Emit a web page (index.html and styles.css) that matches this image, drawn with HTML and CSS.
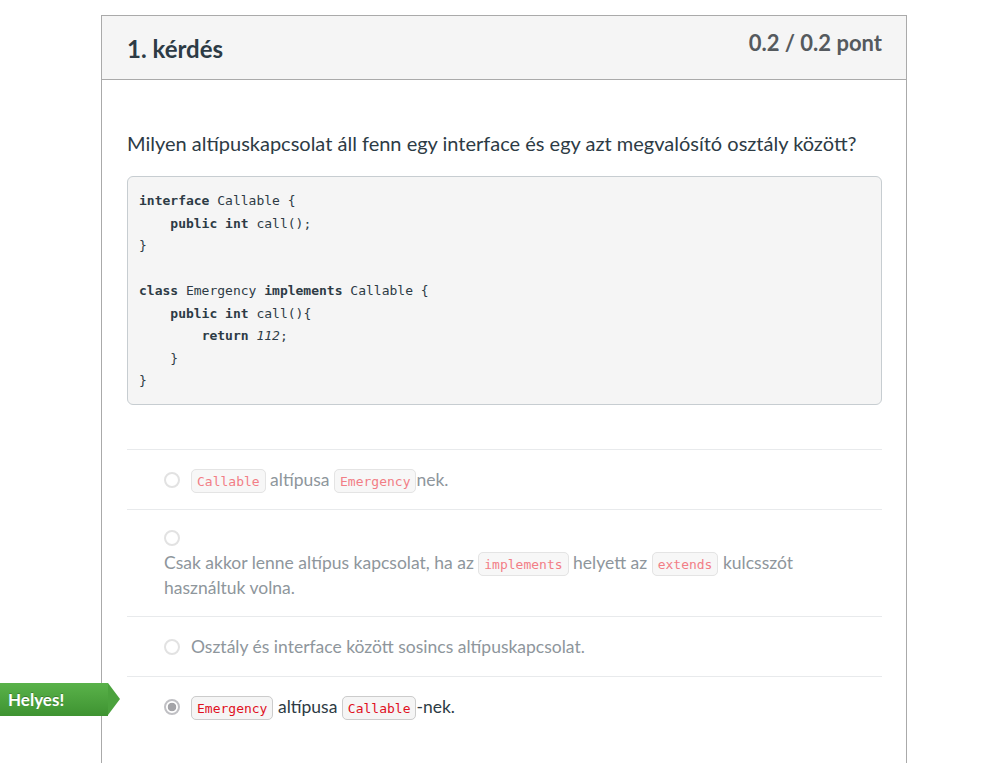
FILE: index.html
```html
<!DOCTYPE html>
<html lang="hu">
<head>
<meta charset="utf-8">
<link rel="stylesheet" href="styles.css">
</head>
<body>
<div class="question">
  <div class="header">
    <h2 class="title">1. kérdés</h2>
    <div class="points">0.2 / 0.2 pont</div>
  </div>
  <div class="content">
    <p class="qtext">Milyen altípuskapcsolat áll fenn egy interface és egy azt megvalósító osztály között?</p>
<pre class="code"><b>interface</b> Callable {
    <b>public</b> <b>int</b> call();
}

<b>class</b> Emergency <b>implements</b> Callable {
    <b>public</b> <b>int</b> call(){
        <b>return</b> <i>112</i>;
    }
}</pre>
    <div class="answers">
      <div class="answer dim">
        <span class="radio"></span><span class="atext"><code>Callable</code> altípusa <code>Emergency</code>nek.</span>
      </div>
      <div class="answer dim stacked">
        <span class="radio"></span>
        <div class="atext">Csak akkor lenne altípus kapcsolat, ha az <code>implements</code> helyett az <code>extends</code> kulcsszót használtuk volna.</div>
      </div>
      <div class="answer dim">
        <span class="radio"></span><span class="atext">Osztály és interface között sosincs altípuskapcsolat.</span>
      </div>
      <div class="answer selected">
        <div class="badge">Helyes!</div>
        <span class="radio checked"></span><span class="atext"><code>Emergency</code> altípusa <code>Callable</code>-nek.</span>
      </div>
    </div>
  </div>
</div>
</body>
</html>
```

FILE: styles.css
```css
html, body {
  margin: 0;
  padding: 0;
  background: #fff;
}
body {
  font-family: Lato, "Noto Sans", sans-serif;
  color: #2d3b45;
  padding-top: 15px;
  padding-left: 101px;
}
.question {
  width: 804px;
  border: 1px solid #aaaaaa;
  border-bottom: 0;
  height: 747px;
}
.header {
  background: #f5f5f5;
  border-bottom: 1px solid #aaaaaa;
  height: 63px;
  display: flex;
  justify-content: space-between;
  align-items: flex-start;
  padding: 0 24px 0 25px;
}
.title {
  margin: 0;
  font-size: 24px;
  font-weight: 700;
  line-height: 28px;
  padding-top: 19px;
  color: #2d3b45;
}
.points {
  font-size: 22px;
  font-weight: 700;
  color: #555a5e;
  line-height: 26px;
  padding-top: 14px;
}
.content {
  padding: 0 24px 0 25px;
}
.qtext {
  margin: 0;
  padding-top: 51px;
  font-size: 20px;
  line-height: 24px;
  color: #2d3b45;
}
.code {
  margin: 21px 0 0 0;
  background: #f5f5f5;
  border: 1px solid #c7cdd1;
  border-radius: 6px;
  padding: 13px 11px 11px 11px;
  font-family: "DejaVu Sans Mono", "Liberation Mono", monospace;
  font-size: 13px;
  line-height: 22.5px;
  color: #2d3b45;
}
.code b { font-weight: 700; }
.code i { font-style: italic; }
.answers {
  margin-top: 44px;
}
.answer {
  position: relative;
  border-top: 1px solid #e8eaec;
  padding: 17px 0 17px 37px;
  font-size: 17.5px;
  line-height: 25px;
  height: 25px;
}
.answer.stacked {
  height: auto;
  padding-top: 20px;
  padding-bottom: 16px;
}
.answer.stacked .radio {
  display: block;
  margin-bottom: 4px;
}
.answer.stacked .atext {
  padding-right: 60px;
}
.answer.dim { color: #8e969c; }
.answer.selected { color: #2d3b45; }
.radio {
  display: inline-block;
  box-sizing: border-box;
  width: 16px;
  height: 16px;
  border: 2px solid #e2e2e2;
  border-radius: 50%;
  background: #fff;
  vertical-align: -2px;
  margin-right: 11px;
}
.radio.checked {
  border: 2px solid #c0c0c4;
  background: radial-gradient(circle, #a4a4a8 0, #a4a4a8 4px, #fff 4.6px);
}
.atext { line-height: 25px; }
code {
  font-family: "DejaVu Sans Mono", "Liberation Mono", monospace;
  font-size: 13px;
  line-height: 1;
  padding: 4px 5px 3px;
  border-radius: 5px;
}
.dim code {
  color: #f27e86;
  background: #f7f7f7;
  border: 1px solid #e4e4e4;
}
.selected code {
  color: #e0101e;
  background: #f5f5f5;
  border: 1px solid #cccccc;
}
.badge {
  position: absolute;
  left: -127px;
  top: 6px;
  width: 108px;
  height: 33px;
  box-sizing: border-box;
  padding-left: 8px;
  background: linear-gradient(#5ab24a, #3e9331);
  color: #fff;
  font-weight: 700;
  font-size: 17px;
  line-height: 33px;
  text-shadow: 0 -1px 0 rgba(0,0,0,0.25);
}
.badge::after {
  content: "";
  position: absolute;
  right: -12px;
  top: 0;
  width: 0;
  height: 0;
  border-top: 16.5px solid transparent;
  border-bottom: 16.5px solid transparent;
  border-left: 12px solid #4ba23d;
}
```
